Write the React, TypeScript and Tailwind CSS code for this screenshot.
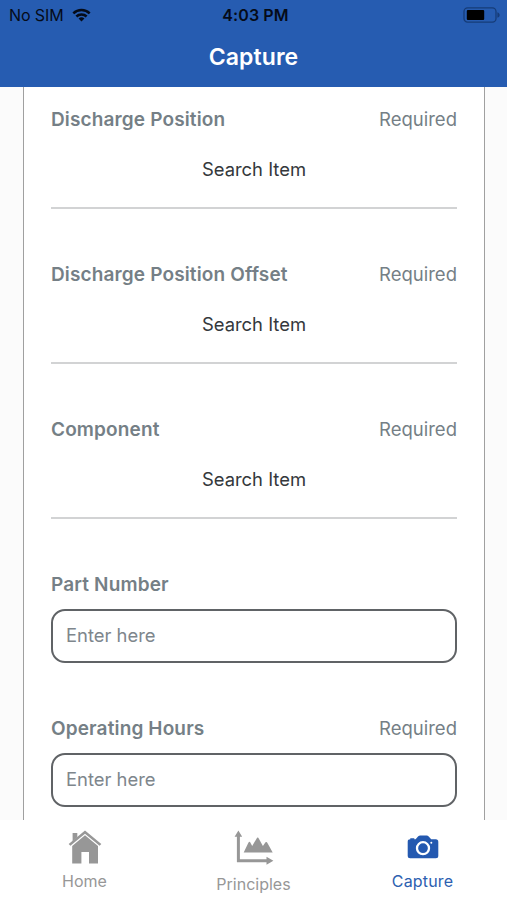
import clsx from 'clsx'
import type { ReactNode } from 'react'

type Field = {
  label: string
  required: boolean
  kind: 'search' | 'input'
}

const fields: Field[] = [
  { label: 'Discharge Position', required: true, kind: 'search' },
  { label: 'Discharge Position Offset', required: true, kind: 'search' },
  { label: 'Component', required: true, kind: 'search' },
  { label: 'Part Number', required: false, kind: 'input' },
  { label: 'Operating Hours', required: true, kind: 'input' },
]

function WifiIcon() {
  return (
    <svg width="19" height="14" viewBox="0 0 20 14" fill="none" stroke="#050b18" strokeWidth="2.7">
      <path d="M1.4 5.3a12.4 12.4 0 0 1 17.2 0" />
      <path d="M4.6 8.6a7.8 7.8 0 0 1 10.8 0" />
      <path d="M10 13.8 6.9 10.8a4.5 4.5 0 0 1 6.2 0z" fill="#050b18" stroke="none" />
    </svg>
  )
}

function BatteryIcon() {
  return (
    <svg width="38" height="16" viewBox="0 0 38 16" fill="none">
      <rect x="1" y="0.9" width="32" height="14.2" rx="3.6" stroke="#163c78" strokeWidth="1.3" />
      <rect x="3.8" y="3" width="17.4" height="10" rx="1" fill="#000" />
      <path d="M34.4 5.2c3 1 3 4.6 0 5.6z" fill="#163c78" />
    </svg>
  )
}

function HomeIcon() {
  return (
    <svg width="34" height="34" viewBox="0 0 34 34" fill="#979797">
      <path d="M4.6 3h4.7v4.2L4.6 11.4z" />
      <path d="M17 .6 33.3 14l-1.7 1.8L17 3.8 2.4 15.8.7 14z" />
      <path d="M17 5.2 30 16v17.6h-9V22h-7.6v11.6H4.2V16z" />
    </svg>
  )
}

function ChartIcon() {
  return (
    <svg width="40" height="36" viewBox="0 0 40 36" fill="#979797">
      <path d="M4.4.5 8.2 6.8H5.9V29.2H32.5V26.7l6.9 4-6.9 4v-2.5H2.9V6.8H.6z" />
      <path d="M9.7 22.5 14 13.4Q15.3 10.4 16.7 13.2L18.2 16l4.3-7.3Q23.7 6.5 24.9 8.7L28.9 16l1.9-2.8Q32.3 10.8 33.7 13.4L38.7 22.5z" />
    </svg>
  )
}

function CameraIcon() {
  return (
    <svg width="32" height="24" viewBox="0 0 32 24">
      <path
        d="M3.3 4.3V3.2h4v1.1h1.3L11 1.6Q12 .6 13.2.6h6.4q1.2 0 2.1.9l2.5 2.8h4.6q2.5 0 2.5 2.5v14q0 2.5-2.5 2.5H3.2Q.7 23.3.7 20.8V6.7Q.7 4.3 3.3 4.3z"
        fill="#2459b0"
      />
      <circle cx="16" cy="13.2" r="6" fill="none" stroke="#fff" strokeWidth="2.3" />
      <circle cx="24.3" cy="7.8" r="1" fill="#fff" />
    </svg>
  )
}

function Header() {
  return (
    <header className="h-[87px] shrink-0 bg-[#265cb1]">
      <div className="grid h-[30px] grid-cols-3 items-center pl-[9px] pr-[6px] text-[#050b18]">
        <div className="flex items-center gap-2">
          <span className="text-[16px] tracking-[-0.1px]">No SIM</span>
          <WifiIcon />
        </div>
        <span className="pl-px text-center text-[16px] font-semibold tracking-[0.1px]">4:03 PM</span>
        <div className="flex justify-end">
          <BatteryIcon />
        </div>
      </div>
      <h1 className="mt-3 text-center text-[23px] font-semibold leading-[30px] tracking-[0.1px] text-white">Capture</h1>
    </header>
  )
}

function FormField({ label, required, kind }: Field) {
  return (
    <div className="pb-[53px]">
      <div className="flex h-6 items-start justify-between text-[#757f86]">
        <span className="pt-px text-[19px] font-semibold leading-6 tracking-[0.14px]">{label}</span>
        {required && <span className="text-[18.5px] leading-6">Required</span>}
      </div>
      {kind === 'search' ? (
        <button className="flex h-[78px] w-full items-center justify-center border-b-2 border-[#d2d3d4] pt-px text-[18.4px] text-[#34383c]">
          Search Item
        </button>
      ) : (
        <input
          className="mt-[13px] block h-[54px] w-full rounded-[14px] border-2 border-[#606366] bg-white px-[13px] pb-0.5 text-[18.4px] placeholder:text-[#7e868c]"
          placeholder="Enter here"
        />
      )}
    </div>
  )
}

function Tab({ label, icon, active }: { label: string; icon: ReactNode; active?: boolean }) {
  return (
    <button
      className={clsx(
        'flex flex-1 flex-col items-center text-[16px] leading-5',
        active ? 'tracking-[0.15px] text-[#2c60b0]' : 'text-[#979797]',
      )}
    >
      {icon}
      <span>{label}</span>
    </button>
  )
}

export default function App() {
  return (
    <div className="flex h-[900px] w-[507px] flex-col overflow-hidden bg-white font-['Inter',sans-serif]">
      <Header />
      <main className="min-h-0 flex-1 overflow-hidden bg-[#fbfbfb] pl-[23px] pr-[22px]">
        <div className="border-x border-[#a0a0a0] bg-white px-[27px] pt-5">
          {fields.map((field) => (
            <FormField key={field.label} {...field} />
          ))}
        </div>
      </main>
      <nav className="flex h-20 shrink-0 bg-white">
        <Tab label="Home" icon={<div className="mt-[10px] h-[41px]"><HomeIcon /></div>} />
        <Tab label="Principles" icon={<div className="mt-[10px] h-11"><ChartIcon /></div>} />
        <Tab label="Capture" icon={<div className="mt-[15px] h-9"><CameraIcon /></div>} active />
      </nav>
    </div>
  )
}
